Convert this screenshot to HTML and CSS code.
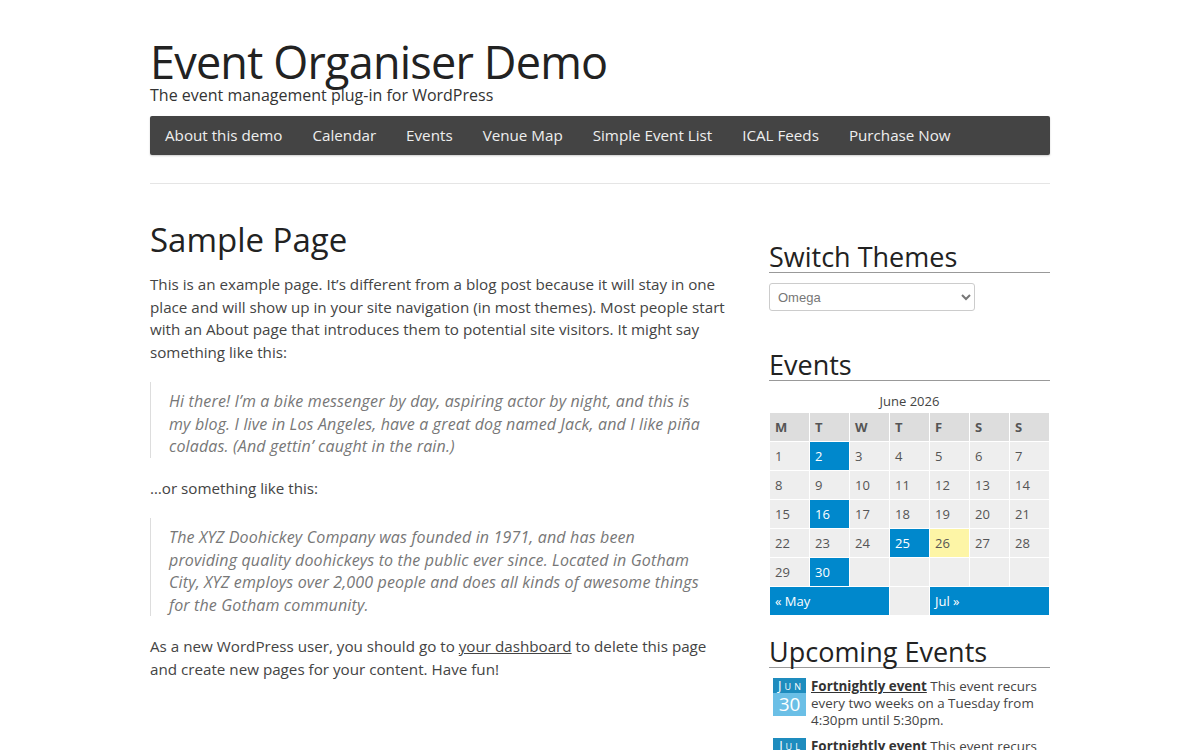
FILE: index.html
```html
<!DOCTYPE html>
<html lang="en">
<head>
    <meta charset="UTF-8">
    <meta name="viewport" content="width=device-width, initial-scale=1.0">
    <link rel="stylesheet" href="styles.css">
    <title>Sample Page | Event Organiser Demo</title>
</head>
<body>
    <div class="site">
        <header class="site-header">
            <h1 class="site-title">Event Organiser Demo</h1>
            <p class="site-desc">The event management plug-in for WordPress</p>
        </header>

        <nav class="main-nav">
            <a href="#">About this demo</a>
            <a href="#">Calendar</a>
            <a href="#">Events</a>
            <a href="#">Venue Map</a>
            <a href="#">Simple Event List</a>
            <a href="#">ICAL Feeds</a>
            <a href="#">Purchase Now</a>
        </nav>

        <hr class="divider">

        <div class="content-wrap">
            <main class="entry">
                <h1 class="entry-title">Sample Page</h1>
                <p>This is an example page. It’s different from a blog post because it will stay in one place and will show up in your site navigation (in most themes). Most people start with an About page that introduces them to potential site visitors. It might say something like this:</p>
                <blockquote>Hi there! I’m a bike messenger by day, aspiring actor by night, and this is my blog. I live in Los Angeles, have a great dog named Jack, and I like piña coladas. (And gettin’ caught in the rain.)</blockquote>
                <p>…or something like this:</p>
                <blockquote>The XYZ Doohickey Company was founded in 1971, and has been providing quality doohickeys to the public ever since. Located in Gotham City, XYZ employs over 2,000 people and does all kinds of awesome things for the Gotham community.</blockquote>
                <p>As a new WordPress user, you should go to <a href="#">your dashboard</a> to delete this page and create new pages for your content. Have fun!</p>
            </main>

            <aside class="sidebar">
                <section class="widget">
                    <h2 class="widget-title">Switch Themes</h2>
                    <select class="theme-select">
                        <option>Omega</option>
                        <option>Twenty Twelve</option>
                    </select>
                </section>

                <section class="widget widget-calendar">
                    <h2 class="widget-title">Events</h2>
                    <table class="calendar">
                        <caption>June 2026</caption>
                        <thead>
                            <tr><th>M</th><th>T</th><th>W</th><th>T</th><th>F</th><th>S</th><th>S</th></tr>
                        </thead>
                        <tbody>
                            <tr><td>1</td><td class="event">2</td><td>3</td><td>4</td><td>5</td><td>6</td><td>7</td></tr>
                            <tr><td>8</td><td>9</td><td>10</td><td>11</td><td>12</td><td>13</td><td>14</td></tr>
                            <tr><td>15</td><td class="event">16</td><td>17</td><td>18</td><td>19</td><td>20</td><td>21</td></tr>
                            <tr><td>22</td><td>23</td><td>24</td><td class="event">25</td><td class="today">26</td><td>27</td><td>28</td></tr>
                            <tr><td>29</td><td class="event">30</td><td></td><td></td><td></td><td></td><td></td></tr>
                        </tbody>
                        <tfoot>
                            <tr><td colspan="3" class="nav-link">« May</td><td></td><td colspan="3" class="nav-link">Jul »</td></tr>
                        </tfoot>
                    </table>
                </section>

                <section class="widget">
                    <h2 class="widget-title">Upcoming Events</h2>
                    <ul class="event-list">
                        <li>
                            <span class="date-badge"><span class="month">Jun</span><span class="day">30</span></span>
                            <p><a href="#">Fortnightly event</a> This event recurs every two weeks on a Tuesday from 4:30pm until 5:30pm.</p>
                        </li>
                        <li>
                            <span class="date-badge"><span class="month">Jul</span><span class="day">14</span></span>
                            <p><a href="#">Fortnightly event</a> This event recurs every two weeks on a Tuesday from 4:30pm until 5:30pm.</p>
                        </li>
                    </ul>
                </section>
            </aside>
        </div>
    </div>
</body>
</html>
```

FILE: styles.css
```css
body {
    margin: 0;
    font-family: 'Open Sans', sans-serif;
    font-size: 15.2px;
    color: #444;
    background-color: #fff;
}

.site {
    width: 900px;
    margin: 0 auto;
}

.site-header {
    padding-top: 37px;
}

.site-title {
    margin: 0;
    font-size: 45px;
    font-weight: normal;
    letter-spacing: -0.8px;
    line-height: 50px;
    color: #222;
}

.site-desc {
    margin: 0;
    font-size: 16px;
    line-height: 16px;
    color: #333;
}

.main-nav {
    display: flex;
    margin-top: 13px;
    background-color: #444;
    border-radius: 2px;
    box-shadow: 0 1px 2px rgba(0, 0, 0, 0.2);
}

.main-nav a {
    padding: 0 15px;
    line-height: 39px;
    font-size: 15.2px;
    color: #eee;
    text-decoration: none;
}

.divider {
    margin: 28px 0 0;
    border: 0;
    border-top: 1px solid #e5e5e5;
}

.content-wrap {
    display: grid;
    grid-template-columns: 1fr 281px;
    gap: 44px;
    padding-top: 34px;
}

.entry-title {
    margin: 0 0 11px;
    font-size: 33px;
    font-weight: normal;
    line-height: 44px;
    color: #222;
}

.entry p {
    margin: 0 0 19px;
    line-height: 22.5px;
}

.entry a {
    color: #444;
}

.entry blockquote {
    margin: 0 20px 19px 0;
    padding: 8px 0 0 18px;
    border-left: 1px solid #ddd;
    font-size: 16px;
    font-style: italic;
    letter-spacing: 0.15px;
    line-height: 22.5px;
    color: #777;
}

.sidebar {
    padding-top: 23px;
}

.widget {
    margin-bottom: 38px;
}

.widget-calendar {
    margin-bottom: 20px;
}

.widget-title {
    margin: 0 0 10px;
    font-size: 27px;
    font-weight: normal;
    line-height: 31px;
    color: #222;
    border-bottom: 1px solid #999;
}

.theme-select {
    display: block;
    width: 206px;
    height: 28px;
    padding: 0 4px;
    font-family: 'Liberation Sans', Arial, sans-serif;
    font-size: 13px;
    color: #777;
    background-color: #fff;
    border: 1px solid #ccc;
    border-radius: 3px;
}

.calendar {
    width: 100%;
    border-collapse: collapse;
    font-size: 13px;
    table-layout: fixed;
}

.calendar caption {
    line-height: 21px;
    color: #444;
}

.calendar th,
.calendar td {
    height: 28px;
    padding: 0 5px;
    border: 1px solid #fff;
    text-align: left;
    background-color: #eee;
    color: #555;
}

.calendar th {
    background-color: #ddd;
    font-weight: bold;
}

.calendar td.event,
.calendar td.nav-link {
    background-color: #0088cc;
    color: #fff;
}

.calendar td.today {
    background-color: #fdf5a6;
}

.event-list {
    margin: 0;
    padding: 0;
    list-style: none;
}

.event-list li {
    display: flex;
    gap: 5px;
    margin-bottom: 9px;
    padding-left: 4px;
}

.event-list p {
    margin: 0;
    font-size: 13.4px;
    line-height: 17px;
    color: #444;
}

.event-list a {
    font-weight: bold;
    color: #333;
}

.date-badge {
    display: flex;
    flex-direction: column;
    flex: 0 0 33px;
    text-align: center;
    color: #fff;
}

.date-badge .month {
    height: 15px;
    line-height: 15px;
    font-size: 13px;
    letter-spacing: 3px;
    text-indent: 3px;
    font-variant: small-caps;
    background-color: #1e8cbe;
}

.date-badge .day {
    height: 23px;
    line-height: 23px;
    font-size: 19px;
    background-color: #6bbfe6;
}
```
